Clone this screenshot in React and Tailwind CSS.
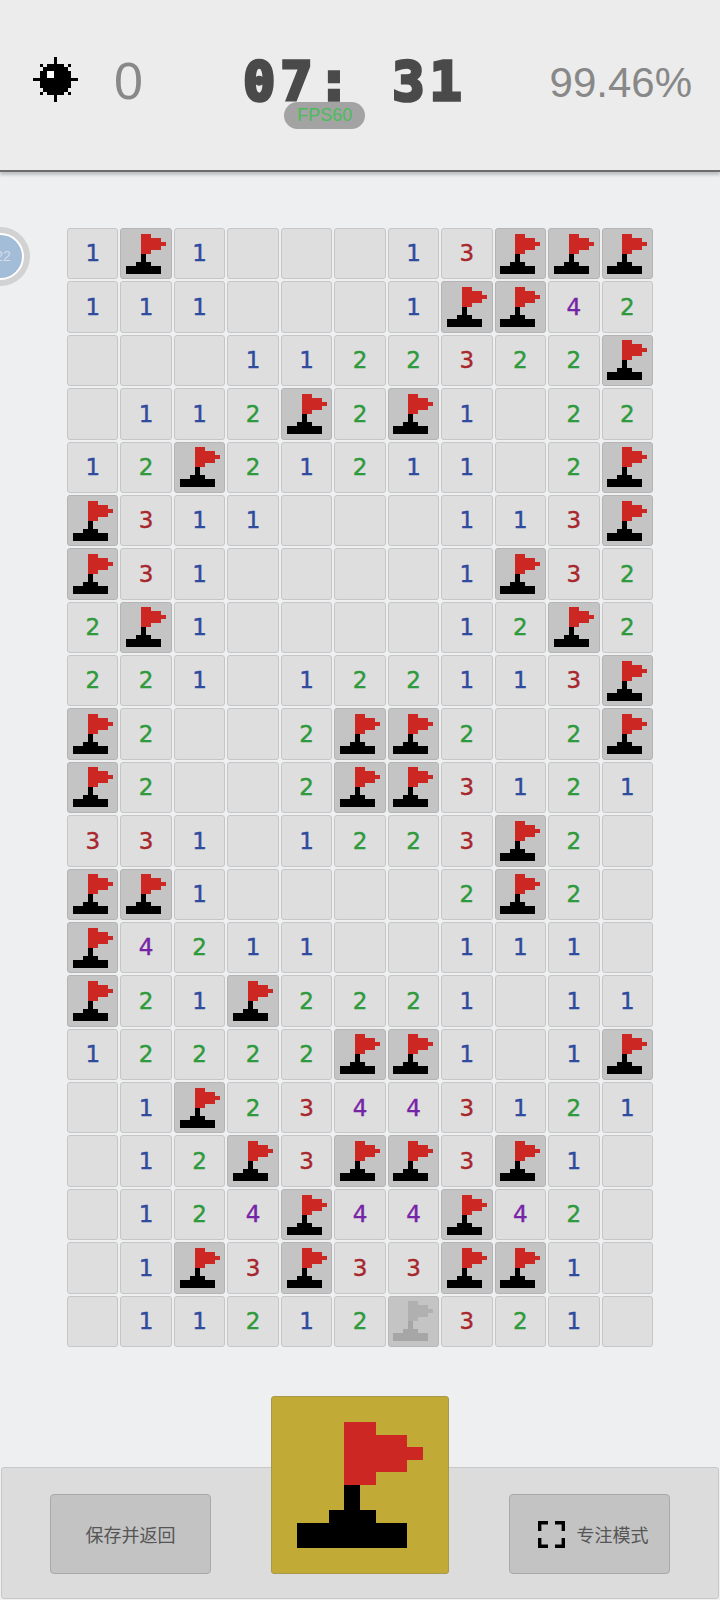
import React from 'react';

const BOARD = [
  '1F1...13FFF',
  '111...1FF42',
  '...1122322F',
  '.112F2F1.22',
  '12F21211.2F',
  'F311...113F',
  'F31....1F32',
  '2F1....12F2',
  '221.122113F',
  'F2..2FF2.2F',
  'F2..2FF3121',
  '331.1223F2.',
  'FF1....2F2.',
  'F4211..111.',
  'F21F2221.11',
  '12222FF1.1F',
  '.1F23443121',
  '.12F3FF3F1.',
  '.124F44F42.',
  '.1F3F33FF1.',
  '.11212G321.',
];

const NUMBER_COLORS = {
  1: 'text-[#2f4b9e]',
  2: 'text-[#2f9a3c]',
  3: 'text-[#a8272d]',
  4: 'text-[#7624a6]',
};

function Flag({ className, red = '#cc2723', black = '#000000' }) {
  return (
    <svg viewBox="0 0 8 10" preserveAspectRatio="none" shapeRendering="crispEdges" className={className}>
      <path fill={red} d="M3 0H5V1H7V2H8V3H7V4H5V5H3Z" />
      <path fill={black} d="M3 5H4V7H5V8H7V10H0V8H2V7H3Z" />
    </svg>
  );
}

function MineIcon() {
  return (
    <svg viewBox="0 0 13 13" shapeRendering="crispEdges" className="w-[45px] h-[45px] shrink-0">
      <path
        fill="#000"
        d="M6 0H7V2H9V3H10V4H11V6H13V7H11V9H10V10H9V11H7V13H6V11H4V10H3V9H2V7H0V6H2V4H3V3H4V2H6Z"
      />
      <path fill="#000" d="M2 2H3V3H2ZM10 2H11V3H10ZM2 10H3V11H2ZM10 10H11V11H10Z" />
      <path fill="#fff" d="M4 4H6V6H4Z" />
    </svg>
  );
}

function FocusIcon() {
  return (
    <svg viewBox="0 0 27 27" fill="none" stroke="#000" strokeWidth="3.4" className="w-[27px] h-[27px]">
      <path d="M1.7 10V1.7H10M17 1.7H25.3V10M1.7 17V25.3H10M17 25.3H25.3V17" />
    </svg>
  );
}

function Cell({ value }) {
  if (value === 'F') {
    return (
      <div className="flex items-center justify-center rounded-[3px] border border-[#b4b4b4] bg-[#c4c4c4]">
        <Flag className="w-[40px] h-[40px]" />
      </div>
    );
  }
  if (value === 'G') {
    return (
      <div className="flex items-center justify-center rounded-[3px] border border-[#b8b8b8] bg-[#c4c4c4]">
        <Flag className="w-[40px] h-[40px]" red="#b0b0b0" black="#a6a6a6" />
      </div>
    );
  }
  return (
    <div
      className={`flex items-center justify-center rounded-[3px] border border-[#c6c6c6] bg-[#dedede] font-['DejaVu_Sans',sans-serif] text-[23px] [-webkit-text-stroke:0.4px_currentColor] ${NUMBER_COLORS[value] || ''}`}
    >
      {value === '.' ? '' : value}
    </div>
  );
}

export default function App() {
  return (
    <div className="relative flex flex-col w-[720px] h-[1600px] overflow-hidden bg-[#eeeff1] font-['Liberation_Sans',sans-serif]">
      <header className="flex items-center justify-between h-[172px] pl-[33px] pr-[28px] pb-[12px] bg-[#ececec] border-b-2 border-[#6b6b6b] shadow-[0_3px_3px_rgba(0,0,0,0.2)]">
        <div className="flex items-center gap-[36px]">
          <MineIcon />
          <span className="mt-[3px] text-[52px] leading-none text-[#888888]">0</span>
        </div>
        <div className="relative mt-[3px] ml-[18px]">
          <div className="pt-[3px] font-['DejaVu_Sans_Mono',monospace] font-bold text-[53px] leading-[44px] tracking-[5.4px] whitespace-pre text-[#4a4a4a] [-webkit-text-stroke:3.5px_#4a4a4a]">
            07: 31
          </div>
          <div className="absolute left-[41px] top-[45px] flex items-center justify-center w-[81px] h-[27px] rounded-full bg-[#a3a3a3] text-[18px] text-[#4cbb5a]">
            FPS60
          </div>
        </div>
        <span className="mt-[7px] text-[42px] leading-none text-[#888888]">99.46%</span>
      </header>

      <div className="absolute left-[-29px] top-[227px] flex items-center justify-center w-[59px] h-[59px] rounded-full bg-[#d2d2d2]">
        <div className="flex items-center justify-center w-[47px] h-[47px] pl-[5px] rounded-full border-2 border-white bg-[#a3bcd8] text-[14px] text-[#d5dee9]">
          22
        </div>
      </div>

      <main className="grid grid-cols-11 grid-rows-[repeat(21,minmax(0,1fr))] gap-[2px] w-[586px] h-[1119px] mt-[56px] ml-[67px]">
        {BOARD.map((row, y) =>
          row.split('').map((value, x) => <Cell key={`${y}-${x}`} value={value} />)
        )}
      </main>

      <footer className="flex items-end justify-between h-[132px] mx-[1px] mt-[120px] px-[48px] pb-[24px] rounded-[3px] border border-[#c8c8c8] bg-[#dcdcdc]">
        <button className="flex items-center justify-center w-[161px] h-[80px] rounded-[4px] border border-[#a9a9a9] bg-[#c3c3c3] font-['Noto_Sans_CJK_SC',sans-serif] text-[18px] text-[#555555]">
          保存并返回
        </button>
        <button className="flex items-center justify-center w-[178px] h-[178px] rounded-[3px] border border-[#a8984a] bg-[#c1ab36]">
          <Flag className="w-[126px] h-[126px]" />
        </button>
        <button className="flex items-center justify-center gap-[12px] w-[161px] h-[80px] pl-[7px] rounded-[4px] border border-[#a9a9a9] bg-[#c3c3c3] font-['Noto_Sans_CJK_SC',sans-serif] text-[18px] text-[#555555]">
          <FocusIcon />
          专注模式
        </button>
      </footer>
    </div>
  );
}
